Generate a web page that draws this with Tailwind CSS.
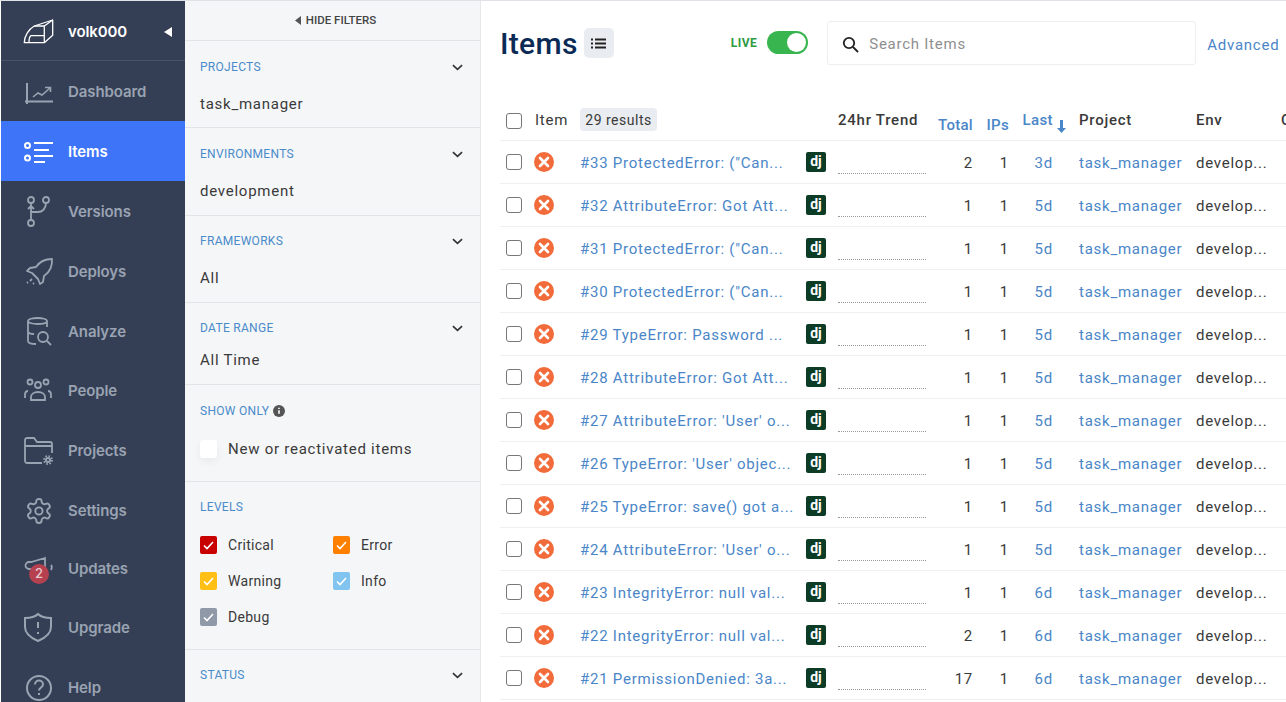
<!DOCTYPE html>
<html lang="en">
<head>
  <meta charset="UTF-8" />
  <title>Items</title>
  <script src="https://cdn.jsdelivr.net/npm/@tailwindcss/browser@4"></script>
</head>
<body class="h-[702px] overflow-hidden bg-white font-['Roboto',sans-serif] text-[15px] tracking-[0.75px] text-[#3a3a3a]">
<div class="flex h-[702px] border-t border-[#dfe2e7] pl-px">

  <!-- Sidebar -->
  <aside class="w-[184px] shrink-0 overflow-hidden bg-[#343f55] font-['Inter',sans-serif] text-[15px] font-semibold tracking-[-0.1px] text-[#9aa3b2]">
    <div class="flex h-[60px] items-center border-b border-[#4a5468] pt-[3px] pl-[22px] text-white">
      <svg class="mr-[13px] h-8 w-8" viewBox="0 0 32 32" fill="none" stroke="currentColor" stroke-width="1.300" stroke-linejoin="round"><path d="M1.300 26.700H21.300L29.700 19.300V4L11.300 10C6 13 1.300 20 1.300 26.700Z"/><path d="M11.300 10H21.300L29.700 4M21.300 10V26.700M6 26.700c0-3 0-6 2-7H21.300"/></svg>
      <span class="flex-1">volk000</span>
      <svg class="mr-[13px] h-[10px] w-2" viewBox="0 0 8 10" fill="currentColor"><path d="M8 0v10L0 5z"/></svg>
    </div>

    <a class="flex h-[60px] items-center pt-[3px] pl-[22px]">
      <svg class="mr-[13px] h-8 w-8" viewBox="0 0 32 32" fill="none" stroke="currentColor" stroke-width="2"><path d="M4 6v21M2 24.500h28"/><path stroke-width="1.600" d="M10 20l5-4 4 2 8-7M22 10.500h5.500V15"/></svg>
      Dashboard
    </a>
    <a class="flex h-[60px] items-center bg-[#3e74f8] pt-[3px] pl-[22px] text-white">
      <svg class="mr-[13px] h-8 w-8" viewBox="0 0 32 32" fill="none" stroke="currentColor" stroke-width="2"><circle cx="4.500" cy="8.500" r="2.500"/><circle cx="4.500" cy="21" r="2.500"/><path d="M11 6h19M11 13h15M11 19h19M11 25h11"/></svg>
      Items
    </a>
    <a class="flex h-[59.500px] items-center pt-[2px] pl-[22px]">
      <svg class="mr-[13px] h-8 w-8" viewBox="0 0 32 32" fill="none" stroke="currentColor" stroke-width="1.800"><circle cx="8" cy="4" r="3"/><circle cx="23" cy="4" r="3"/><circle cx="8" cy="27" r="3"/><path d="M8 7v17M5 13l3-3 3 3M23 7c0 6-4 9-8 9H8"/></svg>
      Versions
    </a>
    <a class="flex h-[60px] items-center pt-[3px] pl-[22px]">
      <svg class="mr-[13px] h-8 w-8" viewBox="0 0 32 32" fill="none" stroke="currentColor" stroke-width="1.800" stroke-linejoin="round"><path d="M29 3c.5 7-2 13-8 17l-1 6-3 2-2-5-6-6-5-2 3-3 6-1c4-6 9-8 16-8z"/><path d="M9 23l-2 2M5 26l-1 1M11 27l-1 1"/></svg>
      Deploys
    </a>
    <a class="flex h-[60px] items-center pt-[3px] pl-[22px]">
      <svg class="mr-[13px] h-8 w-8" viewBox="0 0 32 32" fill="none" stroke="currentColor" stroke-width="1.800"><path d="M5 5c0-4 19-4 19 0 0 4-19 4-19 0zM5 5v20c0 2 4 3 8 3M24 5v6M5 15c0 2 3 3 6 3"/><circle cx="20" cy="21" r="5"/><path d="M24 25l4 4"/></svg>
      Analyze
    </a>
    <a class="flex h-[59.500px] items-center pt-[2px] pl-[22px]">
      <svg class="mr-[13px] h-8 w-8" viewBox="0 0 32 32" fill="none" stroke="currentColor" stroke-width="1.800"><circle cx="15" cy="10" r="3"/><circle cx="7" cy="7" r="2.500"/><circle cx="23" cy="7" r="2.500"/><path d="M8 25v-3c0-3 3-5 7-5s7 2 7 5v3zM2 23v-3c0-2 1-4 3-4M28 23v-3c0-2-1-4-3-4"/></svg>
      People
    </a>
    <a class="flex h-[60px] items-center pt-[2px] pl-[22px]">
      <svg class="mr-[13px] h-8 w-8" viewBox="0 0 32 32" fill="none" stroke="currentColor" stroke-width="1.800"><path d="M19 28H4a2 2 0 0 1-2-2V5a2 2 0 0 1 2-2h7l3 4h13a2 2 0 0 1 2 2v9M2 11h27"/><circle cx="25" cy="25" r="3" fill="currentColor" stroke="none"/><circle cx="25" cy="25" r="4" stroke-width="1.800" stroke-dasharray="1.600 1.540"/><circle cx="25" cy="25" r="1.100" fill="#343f55" stroke="none"/></svg>
      Projects
    </a>
    <a class="flex h-[59px] items-center pt-[3px] pl-[22px]">
      <svg class="mr-[13px] h-8 w-8" viewBox="-1.300 -1.300 26.700 26.700" fill="none" stroke="currentColor" stroke-width="1.600"><path d="M12.220 2h-.44a2 2 0 0 0-2 2v.18a2 2 0 0 1-1 1.730l-.43.250a2 2 0 0 1-2 0l-.15-.08a2 2 0 0 0-2.730.730l-.22.380a2 2 0 0 0 .730 2.730l.15.100a2 2 0 0 1 1 1.720v.510a2 2 0 0 1-1 1.740l-.15.090a2 2 0 0 0-.730 2.730l.22.380a2 2 0 0 0 2.730.730l.15-.08a2 2 0 0 1 2 0l.43.250a2 2 0 0 1 1 1.730V20a2 2 0 0 0 2 2h.44a2 2 0 0 0 2-2v-.18a2 2 0 0 1 1-1.730l.43-.25a2 2 0 0 1 2 0l.15.08a2 2 0 0 0 2.730-.73l.22-.39a2 2 0 0 0-.730-2.730l-.15-.08a2 2 0 0 1-1-1.740v-.5a2 2 0 0 1 1-1.740l.15-.09a2 2 0 0 0 .730-2.730l-.22-.38a2 2 0 0 0-2.730-.73l-.15.080a2 2 0 0 1-2 0l-.43-.25a2 2 0 0 1-1-1.730V4a2 2 0 0 0-2-2z"/><circle cx="12" cy="12" r="3"/></svg>
      Settings
    </a>
    <a class="flex h-[59px] items-center pt-[2px] pl-[22px]">
      <span class="relative mr-[13px] h-8 w-8">
        <svg class="h-8 w-8" viewBox="0 0 32 32" fill="none" stroke="currentColor" stroke-width="1.800"><path d="M22 4L8 8H6a3.500 3.500 0 0 0 0 7h2l14 4zM28 11c1 1 1 3 0 5"/></svg>
        <span class="absolute top-[10px] left-[6px] flex h-5 w-5 items-center justify-center rounded-full bg-[#b5404f] text-[13px] font-medium text-[#e8c9cd]">2</span>
      </span>
      Updates
    </a>
    <a class="flex h-[60px] items-center pl-[22px]">
      <svg class="mr-[13px] h-8 w-8" viewBox="0 0 32 32" fill="none" stroke="currentColor" stroke-width="2"><path d="M15 2c3 3 8 4 13 4v9c0 7-6 11-13 14C8 26 2 22 2 15V6c5 0 10-1 13-4z"/><path d="M15 10v6M15 20v2"/></svg>
      Upgrade
    </a>
    <a class="flex h-[60px] items-center pl-[22px]">
      <svg class="mr-[13px] h-8 w-8" viewBox="0 0 32 32" fill="none" stroke="currentColor" stroke-width="2"><circle cx="16" cy="16" r="12"/><path d="M12 12.500a4 4 0 0 1 8 0c0 3-4 3-4 6M16 21v2"/></svg>
      Help
    </a>
  </aside>

  <!-- Filters -->
  <section class="w-[296px] shrink-0 overflow-hidden border-r border-[#e6e8ec] bg-[#f5f6f8]">
    <div class="flex h-[40px] items-center justify-center gap-[5px] border-b border-[#e2e4e8] pl-[6px] text-[11.500px] font-medium tracking-normal text-[#444]">
      <svg class="h-[9px] w-[6px]" viewBox="0 0 6 9" fill="#555"><path d="M6 0v9L0 4.500z"/></svg>
      HIDE FILTERS
    </div>

    <div class="h-[87px] border-b border-[#e2e4e8] px-[15px] pt-[17px]">
      <div class="flex items-center justify-between text-[12px] tracking-[0.3px] text-[#4a8bc9]">PROJECTS
        <svg class="mr-[2px] h-[7px] w-[11px]" viewBox="0 0 12 7" fill="none" stroke="#333" stroke-width="1.800"><path d="M1 1l5 4.500L11 1"/></svg>
      </div>
      <p class="mt-[17px]">task_manager</p>
    </div>
    <div class="h-[88px] border-b border-[#e2e4e8] px-[15px] pt-[17px]">
      <div class="flex items-center justify-between text-[12px] tracking-[0.3px] text-[#4a8bc9]">ENVIRONMENTS
        <svg class="mr-[2px] h-[7px] w-[11px]" viewBox="0 0 12 7" fill="none" stroke="#333" stroke-width="1.800"><path d="M1 1l5 4.500L11 1"/></svg>
      </div>
      <p class="mt-[17px]">development</p>
    </div>
    <div class="h-[87px] border-b border-[#e2e4e8] px-[15px] pt-[16px]">
      <div class="flex items-center justify-between text-[12px] tracking-[0.3px] text-[#4a8bc9]">FRAMEWORKS
        <svg class="mr-[2px] h-[7px] w-[11px]" viewBox="0 0 12 7" fill="none" stroke="#333" stroke-width="1.800"><path d="M1 1l5 4.500L11 1"/></svg>
      </div>
      <p class="mt-[17px]">All</p>
    </div>
    <div class="h-[82px] border-b border-[#e2e4e8] px-[15px] pt-[16px]">
      <div class="flex items-center justify-between text-[12px] tracking-[0.3px] text-[#4a8bc9]">DATE RANGE
        <svg class="mr-[2px] h-[7px] w-[11px]" viewBox="0 0 12 7" fill="none" stroke="#333" stroke-width="1.800"><path d="M1 1l5 4.500L11 1"/></svg>
      </div>
      <p class="mt-[12px]">All Time</p>
    </div>
    <div class="h-[97px] border-b border-[#e2e4e8] px-[15px] pt-[17px]">
      <div class="flex items-center gap-[4px] text-[12px] tracking-[0.3px] text-[#4a8bc9]">SHOW ONLY
        <svg class="h-3 w-3" viewBox="0 0 12 12"><circle cx="6" cy="6" r="6" fill="#555"/><path d="M6 5.200v3.600M6 2.800v1.200" stroke="#fff" stroke-width="1.600"/></svg>
      </div>
      <div class="mt-[18px] flex items-center gap-[11px]">
        <span class="h-[18px] w-[17px] rounded-[3px] bg-white shadow-[0_4px_8px_rgba(0,0,0,0.05)]"></span>
        New or reactivated items
      </div>
    </div>
    <div class="h-[168px] border-b border-[#e2e4e8] px-[15px] pt-[16px]">
      <div class="text-[12px] tracking-[0.3px] text-[#4a8bc9]">LEVELS</div>
      <div class="mt-[20px] grid grid-cols-[133px_1fr] gap-y-[18px] text-[14px] tracking-[0.3px]">
        <label class="flex h-[18px] items-center gap-[11px]">
          <span class="flex h-[18px] w-[17px] items-center justify-center rounded-[2px] bg-[#c80000]"><svg class="h-[9px] w-[11px]" viewBox="0 0 11 9" fill="none" stroke="#fff" stroke-width="1.600"><path d="M1 4.500L4 7.500 10 1"/></svg></span>Critical
        </label>
        <label class="flex h-[18px] items-center gap-[11px]">
          <span class="flex h-[18px] w-[17px] items-center justify-center rounded-[2px] bg-[#ff7f00]"><svg class="h-[9px] w-[11px]" viewBox="0 0 11 9" fill="none" stroke="#fff" stroke-width="1.600"><path d="M1 4.500L4 7.500 10 1"/></svg></span>Error
        </label>
        <label class="flex h-[18px] items-center gap-[11px]">
          <span class="flex h-[18px] w-[17px] items-center justify-center rounded-[2px] bg-[#ffbf14]"><svg class="h-[9px] w-[11px]" viewBox="0 0 11 9" fill="none" stroke="#fff" stroke-width="1.600"><path d="M1 4.500L4 7.500 10 1"/></svg></span>Warning
        </label>
        <label class="flex h-[18px] items-center gap-[11px]">
          <span class="flex h-[18px] w-[17px] items-center justify-center rounded-[2px] bg-[#80c4ef]"><svg class="h-[9px] w-[11px]" viewBox="0 0 11 9" fill="none" stroke="#fff" stroke-width="1.600"><path d="M1 4.500L4 7.500 10 1"/></svg></span>Info
        </label>
        <label class="flex h-[18px] items-center gap-[11px]">
          <span class="flex h-[18px] w-[17px] items-center justify-center rounded-[2px] bg-[#8f99a8]"><svg class="h-[9px] w-[11px]" viewBox="0 0 11 9" fill="none" stroke="#fff" stroke-width="1.600"><path d="M1 4.500L4 7.500 10 1"/></svg></span>Debug
        </label>
      </div>
    </div>
    <div class="px-[15px] pt-[16px]">
      <div class="flex items-center justify-between text-[12px] tracking-[0.3px] text-[#4a8bc9]">STATUS
        <svg class="mr-[2px] h-[7px] w-[11px]" viewBox="0 0 12 7" fill="none" stroke="#333" stroke-width="1.800"><path d="M1 1l5 4.500L11 1"/></svg>
      </div>
    </div>
  </section>

  <!-- Main -->
  <main class="min-w-0 flex-1 overflow-hidden pl-[19px]">
    <header class="flex h-[88px] items-start">
      <h1 class="mt-[23px] text-[30px] leading-[40px] font-medium tracking-[0.3px] text-[#0b2a55]">Items</h1>
      <button class="mt-[27px] ml-[6px] flex h-[30px] w-[30px] items-center justify-center rounded-[5px] bg-[#e9ecf0]">
        <svg class="h-[11px] w-[15px]" viewBox="0 0 15 11" fill="none" stroke="#222" stroke-width="2"><path d="M0 1.500h2M4 1.500h11M0 5.500h2M4 5.500h11M0 9.500h2M4 9.500h11"/></svg>
      </button>
      <span class="mt-[35px] ml-[117px] text-[12px] leading-[15px] font-bold tracking-[0.5px] text-[#2e9a3f]">LIVE</span>
      <span class="mt-[30px] ml-[10px] flex h-[23px] w-[41px] items-center justify-end rounded-full bg-[#39b54f] pr-[2px]"><span class="h-[19px] w-[19px] rounded-full bg-white"></span></span>
      <div class="mt-[20px] ml-[19px] flex h-[44px] w-[369px] shrink-0 items-center rounded-[3px] border border-[#eceef1] pt-[2px] pl-[14px] text-[#8f8f8f]">
        <svg class="mr-[10px] h-[17px] w-[17px]" viewBox="0 0 17 17" fill="none" stroke="#222" stroke-width="1.800"><circle cx="7" cy="7" r="5.200"/><path d="M11 11l5 5"/></svg>
        Search Items
      </div>
      <a class="mt-[35px] ml-[11px] shrink-0 leading-[18px] text-[#4a86c8]">Advanced</a>
    </header>

    <div id="table" class="w-[900px]">
      <div class="grid h-[52px] grid-cols-[28px_46px_226px_32px_88px_47px_36px_44px_26px_117px_85px_100px] items-center border-b border-[#eeeff1] pt-[12px] pl-[6px] font-medium">
        <span class="h-4 w-4 rounded-[3px] border-[1.500px] border-[#777] bg-white"></span>
        <span class="pl-px font-normal">Item</span>
        <span class="mb-[3px] h-[23px] w-[77px] rounded-[4px] bg-[#e9ecf0] pt-px text-center text-[14px] leading-[22px] font-normal tracking-[0.5px]">29 results</span>
        <span></span>
        <span class="whitespace-nowrap">24hr Trend</span>
        <span class="mt-[10px] text-right tracking-[0.3px] text-[#4a86c8]">Total</span>
        <span class="mt-[10px] text-right tracking-[0.3px] text-[#4a86c8]">IPs</span>
        <span class="text-right tracking-[0.4px] text-[#4a86c8]">Last</span>
        <span class="pt-[12px] pl-[4px]"><svg class="h-[13px] w-[9px]" viewBox="0 0 9 13" fill="#4a86c8"><path d="M3 0h3v8h3l-4.500 5L0 8h3z"/></svg></span>
        <span>Project</span>
        <span>Env</span>
        <span>C</span>
      </div>
      <div id="rows"></div>
    </div>
  </main>
</div>

<script>
  const items = [
    ['#33 ProtectedError: ("Can...', 2, '3d'],
    ['#32 AttributeError: Got Att...', 1, '5d'],
    ['#31 ProtectedError: ("Can...', 1, '5d'],
    ['#30 ProtectedError: ("Can...', 1, '5d'],
    ['#29 TypeError: Password ...', 1, '5d'],
    ['#28 AttributeError: Got Att...', 1, '5d'],
    ["#27 AttributeError: 'User' o...", 1, '5d'],
    ["#26 TypeError: 'User' objec...", 1, '5d'],
    ['#25 TypeError: save() got a...', 1, '5d'],
    ["#24 AttributeError: 'User' o...", 1, '5d'],
    ['#23 IntegrityError: null val...', 1, '6d'],
    ['#22 IntegrityError: null val...', 2, '6d'],
    ['#21 PermissionDenied: 3a...', 17, '6d'],
  ];

  document.getElementById('rows').innerHTML = items.map(item => `
    <div class="grid h-[43px] grid-cols-[28px_46px_226px_32px_88px_47px_36px_44px_26px_117px_85px_100px] items-center border-b border-[#eeeff1] pt-[3px] pl-[6px]">
      <span class="mb-[4px] h-4 w-4 rounded-[3px] border-[1.500px] border-[#777] bg-white"></span>
      <svg class="mb-[4px] h-5 w-5" viewBox="0 0 20 20"><circle cx="10" cy="10" r="10" fill="#f26b3a"/><path d="M6 6l8 8M14 6l-8 8" stroke="#fff" stroke-width="2.600" stroke-linecap="round"/></svg>
      <a class="whitespace-nowrap text-[#4a86c8]">${item[0]}</a>
      <span class="mb-[4px] flex h-5 w-5 items-center justify-center rounded-[2px] bg-[#0c3c26] text-[14px] font-bold tracking-normal text-white">dj</span>
      <span class="mt-[19px] h-px border-t border-dotted border-[#999]"></span>
      <span class="text-right">${item[1]}</span>
      <span class="text-right">1</span>
      <a class="text-right text-[#4a86c8]">${item[2]}</a>
      <span></span>
      <a class="text-[#4a86c8]">task_manager</a>
      <span>develop...</span>
      <span></span>
    </div>
  `).join('');
</script>
</body>
</html>
